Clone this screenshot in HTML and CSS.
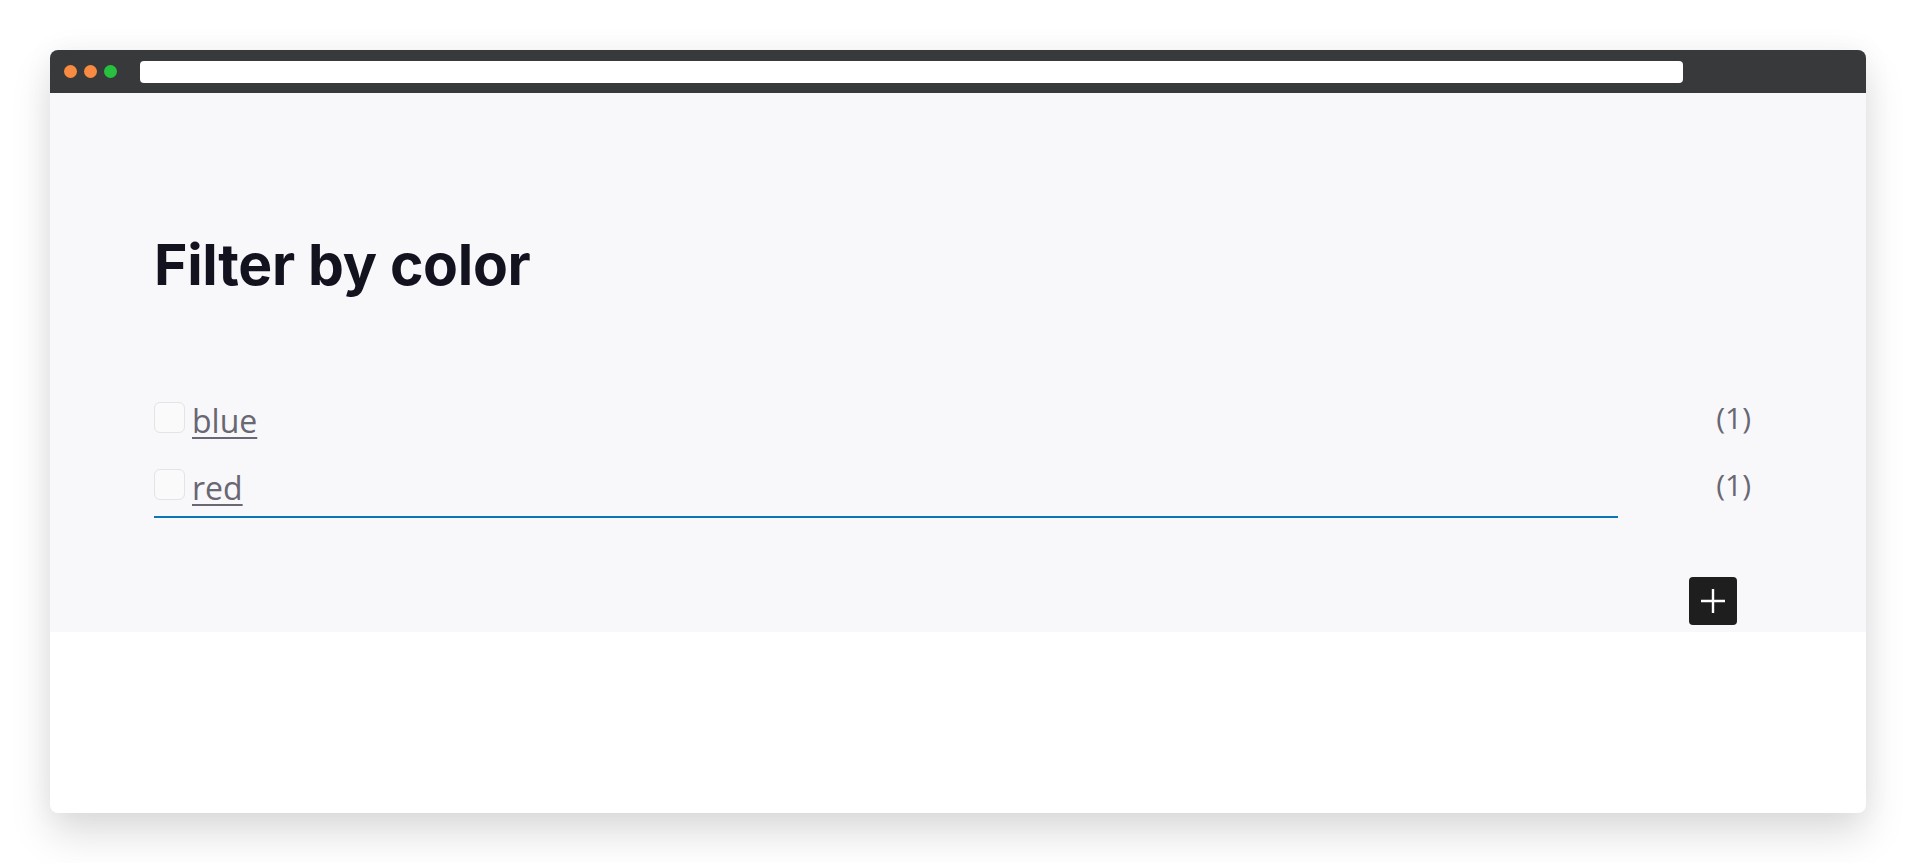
FILE: index.html
```html
<!DOCTYPE HTML>
<html>
	<head>
		<meta http-equiv="Content-Type" content="text/html; charset=UTF-8" />
		<title>Filter by color</title>
		<link rel="stylesheet" href="styles.css">
	</head>
	<body>
		<div class="window">
			<div class="titlebar">
				<div class="dots">
					<span class="dot dot--orange"></span>
					<span class="dot dot--orange"></span>
					<span class="dot dot--green"></span>
				</div>
				<div class="addressbar"></div>
			</div>
			<div class="content">
				<h2 class="title">Filter by color</h2>
				<div class="filter">
					<ul class="options">
						<li class="option"><span class="checkbox"></span><a href="#" class="option_link">blue</a></li>
						<li class="option"><span class="checkbox"></span><a href="#" class="option_link">red</a></li>
					</ul>
					<ul class="counts">
						<li class="count">(1)</li>
						<li class="count">(1)</li>
					</ul>
				</div>
				<div class="actions">
					<button class="add_btn" type="button">
						<svg width="24" height="24" viewBox="0 0 24 24"><path d="M12 0v24M0 12h24" stroke="#fff" stroke-width="2.4" fill="none"/></svg>
					</button>
				</div>
			</div>
		</div>
	</body>
</html>
```

FILE: styles.css
```css
body {
	margin: 0;
	padding: 50px;
	background: #fff;
	font-family: "Open Sans", Helvetica, Arial, sans-serif;
}
ul {
	list-style: none;
	margin: 0;
	padding: 0;
}
.window {
	height: 763px;
	border-radius: 8px;
	overflow: hidden;
	background: #fff;
	box-shadow: 0 22px 40px rgba(0, 0, 0, .13), 0 0 30px rgba(0, 0, 0, .05);
}
.titlebar {
	height: 43px;
	display: flex;
	align-items: center;
	padding: 0 183px 0 14px;
	background: #38393b;
}
.dots {
	display: flex;
	gap: 7px;
}
.dot {
	width: 13px;
	height: 13px;
	border-radius: 50%;
}
.dot--orange {
	background: #f88a41;
}
.dot--green {
	background: #27c13f;
}
.addressbar {
	flex-grow: 1;
	height: 22px;
	margin-left: 23px;
	margin-top: 1px;
	border-radius: 4px;
	background: #fff;
}
.content {
	background: #f8f8fa;
	padding: 137px 115px 7px 104px;
}
.title {
	margin: 0;
	font-family: Inter, "Open Sans", sans-serif;
	font-weight: 700;
	font-size: 57px;
	line-height: 70px;
	letter-spacing: -0.3px;
	color: #13121f;
}
.filter {
	display: flex;
	margin-top: 99px;
}
.options {
	flex-grow: 1;
	padding-bottom: 6px;
	border-bottom: 2px solid #0b77b7;
}
.option, .count {
	display: flex;
	align-items: flex-start;
	height: 44px;
	line-height: 44px;
	font-size: 32px;
	color: #686773;
}
.option + .option, .count + .count {
	margin-top: 23px;
}
.checkbox {
	width: 29px;
	height: 29px;
	margin-top: 3px;
	margin-right: 7px;
	border: 1px solid #e3e3e8;
	border-radius: 6px;
	background: #fafafb;
}
.option_link {
	color: #686773;
	text-decoration: underline;
	text-decoration-thickness: 2px;
	text-underline-offset: 4px;
}
.counts {
	width: 133px;
}
.count {
	justify-content: flex-end;
	font-size: 30px;
	line-height: 37px;
}
.actions {
	display: flex;
	justify-content: flex-end;
	padding: 59px 14px 0 0;
}
.add_btn {
	width: 48px;
	height: 48px;
	display: flex;
	align-items: center;
	justify-content: center;
	padding: 0;
	border: 0;
	border-radius: 4px;
	background: #1e1e1e;
	cursor: pointer;
}
```
